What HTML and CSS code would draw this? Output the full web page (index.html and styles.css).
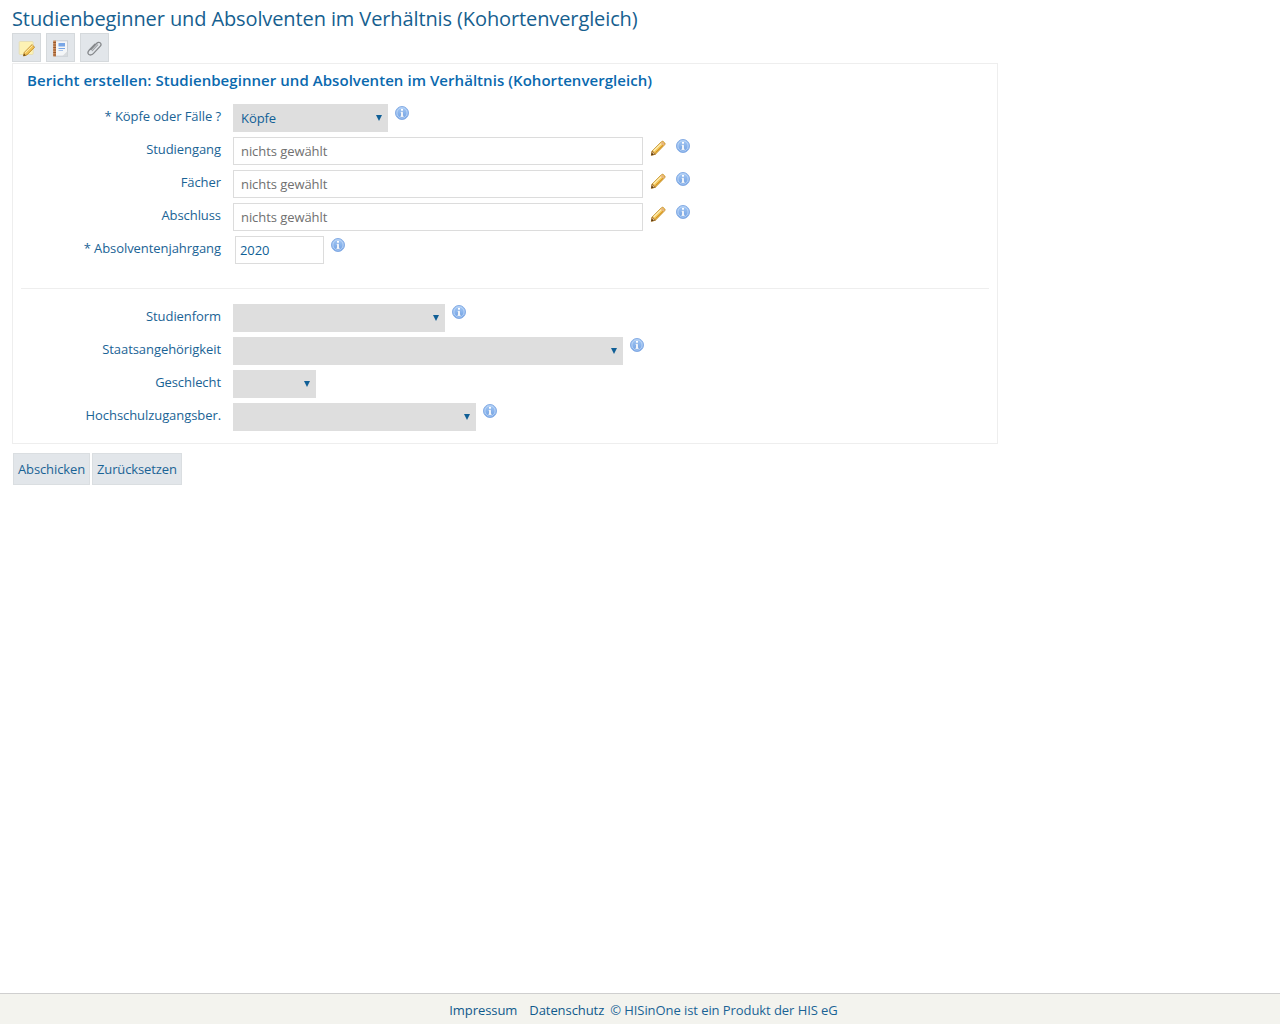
FILE: index.html
```html
<!DOCTYPE html>
<html lang="de">
<head>
<meta charset="utf-8">
<title>Studienbeginner und Absolventen im Verhältnis (Kohortenvergleich)</title>
<link rel="stylesheet" href="styles.css">
</head>
<body>
<svg class="defs" width="0" height="0" aria-hidden="true">
  <defs>
    <linearGradient id="ig" x1="0" y1="0" x2="0" y2="1"><stop offset="0" stop-color="#a6c9f4"/><stop offset="1" stop-color="#6d9fe4"/></linearGradient>
    <linearGradient id="pg" x1="0" y1="0" x2="1" y2="1"><stop offset="0" stop-color="#fbe28c"/><stop offset="1" stop-color="#e8a92c"/></linearGradient>
    <symbol id="info" viewBox="0 0 14 14">
      <circle cx="7" cy="7" r="6.5" fill="url(#ig)" stroke="#86ade4" stroke-width="1"/>
      <circle cx="7" cy="7" r="5.1" fill="none" stroke="#c4dbf7" stroke-width=".8"/>
      <rect x="6" y="2.9" width="2" height="1.8" fill="#fff"/>
      <path d="M5.6 5.8H8v4h.7v1.1H5.4V9.8H6V6.9h-.4z" fill="#fff" stroke="#7d9fcf" stroke-width=".25"/>
    </symbol>
    <symbol id="pencil" viewBox="0 0 16 16">
      <path d="M1.4 15.2l.8-4.2L11.4 1.8c.8-.7 1.5-.7 2.2 0l.9.9c.7.8.7 1.5 0 2.2L5.4 14.2z" fill="url(#pg)" stroke="#c08a20" stroke-width=".9"/>
      <path d="M3.6 11L12 2.9" stroke="#fff1b8" stroke-width="1.2"/>
      <path d="M5.4 12.6L13.6 4.6" stroke="#d9951f" stroke-width="1"/>
      <path d="M11.4 2.4l2.6 2.6" stroke="#e6b383" stroke-width="1.8"/>
      <path d="M1.4 15.2l.8-4.2 3.2 3.2z" fill="#eac391" stroke="#8a5a1a" stroke-width=".7"/>
      <path d="M1.4 15.2l.5-2.4 1.8 1.8z" fill="#4e300c"/>
    </symbol>
  </defs>
</svg>
<main class="content">
  <h1 class="title">Studienbeginner und Absolventen im Verhältnis (Kohortenvergleich)</h1>
  <div class="toolbar">
    <a class="tool" href="#" aria-label="Notiz">
      <svg width="17" height="17" viewBox="0 0 17 17"><rect x="1.2" y="1.5" width="14" height="13" rx="1" fill="#fdf2b4" stroke="#e6dfb8"/><path d="M5.4 16l.9-3.6L14 4.6l2.6 2.6-7.6 7.7z" fill="url(#pg)" stroke="#b8801e" stroke-width=".8"/><path d="M7.2 12.6L14.6 5.4" stroke="#fff1b8" stroke-width=".9"/><path d="M5.4 16l.6-2.4 1.8 1.8z" fill="#6b4513"/></svg>
    </a>
    <a class="tool" href="#" aria-label="Notizbuch">
      <svg width="17" height="17" viewBox="0 0 17 17"><rect x="3" y=".8" width="12.5" height="15.4" fill="#f4f6f8" stroke="#c9ced3"/><rect x="1.2" y=".5" width="2.8" height="16" fill="#c98a5a"/><path d="M1.2 2.5H4M1.2 5H4M1.2 7.5H4M1.2 10H4M1.2 12.5H4M1.2 15H4" stroke="#8a4a20" stroke-width=".8"/><path d="M6.5 3h6.5v3.5H6.5zM6.5 8h6.5v1H6.5z" fill="#78a6e6"/><path d="M6.5 10.5h4.5" stroke="#a9c4ea"/><path d="M10.5 16l5-5v5z" fill="#d8dbde"/></svg>
    </a>
    <a class="tool" href="#" aria-label="Anhang">
      <svg width="17" height="17" viewBox="0 0 17 17" fill="none"><path d="M5 9.5L10.8 3.2c1-1.1 2.6-1.2 3.5-.3s.8 2.4-.2 3.5L7.3 13.6c-1.5 1.6-3.6 1.8-4.6.8s-.8-2.9.6-4.4l5.6-5.9" stroke="#85888b" stroke-width="1.3" stroke-linecap="round"/><path d="M6.3 10.7l5.4-5.8" stroke="#a0a3a6" stroke-width="1.2" stroke-linecap="round"/></svg>
    </a>
  </div>
  <section class="panel">
    <h2 class="panel-title">Bericht erstellen: Studienbeginner und Absolventen im Verhältnis (Kohortenvergleich)</h2>
    <div class="rows first">
      <div class="row">
        <label class="label">* Köpfe oder Fälle ?</label>
        <div class="select w155">Köpfe</div>
        <svg class="info"><use href="#info"/></svg>
      </div>
      <div class="row">
        <label class="label">Studiengang</label>
        <div class="picker">nichts gewählt</div>
        <svg class="pencil"><use href="#pencil"/></svg>
        <svg class="info near"><use href="#info"/></svg>
      </div>
      <div class="row">
        <label class="label">Fächer</label>
        <div class="picker">nichts gewählt</div>
        <svg class="pencil"><use href="#pencil"/></svg>
        <svg class="info near"><use href="#info"/></svg>
      </div>
      <div class="row">
        <label class="label">Abschluss</label>
        <div class="picker">nichts gewählt</div>
        <svg class="pencil"><use href="#pencil"/></svg>
        <svg class="info near"><use href="#info"/></svg>
      </div>
      <div class="row">
        <label class="label">* Absolventenjahrgang</label>
        <div class="year">2020</div>
        <svg class="info"><use href="#info"/></svg>
      </div>
    </div>
    <hr class="divider">
    <div class="rows second">
      <div class="row">
        <label class="label">Studienform</label>
        <div class="select w212"></div>
        <svg class="info"><use href="#info"/></svg>
      </div>
      <div class="row">
        <label class="label">Staatsangehörigkeit</label>
        <div class="select w390"></div>
        <svg class="info"><use href="#info"/></svg>
      </div>
      <div class="row">
        <label class="label">Geschlecht</label>
        <div class="select w83"></div>
      </div>
      <div class="row">
        <label class="label">Hochschulzugangsber.</label>
        <div class="select w243"></div>
        <svg class="info"><use href="#info"/></svg>
      </div>
    </div>
  </section>
  <div class="actions">
    <button class="btn" type="button">Abschicken</button>
    <button class="btn" type="button">Zurücksetzen</button>
  </div>
</main>
<footer class="footer">
  <a href="#" class="flink">Impressum</a>
  <a href="#" class="flink">Datenschutz</a>
  <span class="copy">© HISinOne ist ein Produkt der HIS eG</span>
</footer>
</body>
</html>
```
FILE: styles.css
```css
* { box-sizing: border-box; }
html, body { height: 100%; }
body {
  margin: 0;
  min-height: 100vh;
  display: flex;
  flex-direction: column;
  background: #fff;
  color: #105f96;
  font: 13px/18px "Open Sans", "Noto Sans", sans-serif;
  letter-spacing: -0.07px;
}
.defs { position: absolute; }
.content { flex: 1; padding: 5px 0 0 12px; }
.title {
  margin: 0;
  height: 28px;
  font-size: 20px;
  line-height: 28px;
  font-weight: 400;
  letter-spacing: -0.11px;
  color: #16608f;
}
.toolbar { display: flex; gap: 5px; height: 30px; }
.tool {
  width: 29px;
  height: 29px;
  display: flex;
  align-items: center;
  justify-content: center;
  padding-top: 2px;
  background: #e2e6ea;
  border: 1px solid #d5d9dc;
}
.panel {
  width: 986px;
  height: 381px;
  border: 1px solid #eeeeee;
  padding: 0 8px;
}
.panel-title {
  margin: 0;
  padding: 6px 0 0 6px;
  height: 40px;
  font-size: 15px;
  line-height: 20px;
  font-weight: 600;
  letter-spacing: 0.05px;
  color: #0a69ae;
}
.rows { display: flex; flex-direction: column; gap: 5px; }
.row { display: flex; height: 28px; align-items: flex-start; }
.label {
  width: 200px;
  margin-right: 12px;
  text-align: right;
  line-height: 24px;
  color: #1a6395;
}
.select {
  position: relative;
  height: 28px;
  padding-left: 8px;
  line-height: 28px;
  background: #dedede;
  color: #105f96;
}
.select::after {
  content: "";
  position: absolute;
  right: 6px;
  top: 11px;
  border-left: 3px solid transparent;
  border-right: 3px solid transparent;
  border-top: 6px solid #105f96;
}
.w155 { width: 155px; }
.w212 { width: 212px; }
.w390 { width: 390px; }
.w83 { width: 83px; }
.w243 { width: 243px; }
.picker {
  width: 410px;
  height: 28px;
  padding-left: 7px;
  line-height: 26px;
  border: 1px solid #dcdcdc;
  color: #707070;
}
.year {
  width: 89px;
  height: 28px;
  margin-left: 2px;
  padding-left: 4px;
  line-height: 26px;
  border: 1px solid #dcdcdc;
  color: #105f96;
}
.info { width: 14px; height: 14px; margin: 2px 0 0 7px; flex: none; }
.info.near { margin-left: 10px; }
.second .info { margin-top: 1px; }
.pencil { width: 16px; height: 16px; margin: 3px 0 0 7px; flex: none; }
.divider {
  margin: 24px 0 15px;
  height: 1px;
  border: 0;
  background: #eeeeee;
}
.actions { display: flex; gap: 2px; padding: 9px 0 0 1px; }
.btn {
  height: 32px;
  padding: 0 4px;
  font: inherit;
  letter-spacing: -0.12px;
  color: #1a6395;
  background: #e2e6ea;
  border: 1px solid #dadee1;
}
.footer {
  height: 31px;
  display: flex;
  justify-content: center;
  align-items: center;
  padding: 1px 0 0 7px;
  background: #f3f3ee;
  border-top: 1px solid #cfcfcf;
}
.flink { color: #105a8c; text-decoration: none; margin-right: 12px; }
.flink + .flink { margin-right: 6px; }
.copy { color: #1a6395; }
```
